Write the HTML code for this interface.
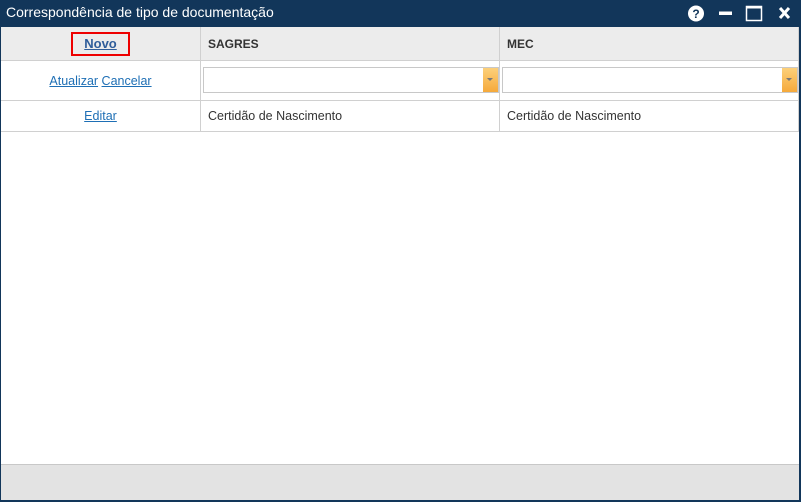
<!DOCTYPE html>
<html><head><meta charset="utf-8"><style>
*{margin:0;padding:0;box-sizing:border-box}
body{width:801px;height:502px;overflow:hidden;background:#12365a;font-family:"Liberation Sans",sans-serif;font-size:12.5px;color:#333;position:relative}
.title{position:absolute;left:0;top:0;width:801px;height:26px;background:#12365a;color:#fff;font-size:14px;line-height:25px;padding-left:6px}
.content{position:absolute;left:1px;top:27px;width:798px;height:437px;background:#fff}
.footer{position:absolute;left:1px;top:464px;width:798px;height:36px;background:#e3e3e3;border-top:1px solid #c8c8c8}
.c{position:absolute;border-right:1px solid #d0d0d0;border-bottom:1px solid #d0d0d0}
a{color:#1e6fb5;text-decoration:underline}
.dd{position:absolute;height:26px;border:1px solid #c8c8c8;background:#fff}
.arr{position:absolute;right:0;top:0;width:15px;height:24px;background:linear-gradient(#fcd07a,#f5a93b)}
.arr:after{content:"";position:absolute;left:4px;top:10px;border:3px solid transparent;border-top:3px solid #777}
</style></head><body>
<div class="title">Correspondência de tipo de documentação</div>
<svg style="position:absolute;left:686px;top:5px" width="106" height="17">
<circle cx="10" cy="8.5" r="8" fill="#fff"/>
<text x="10" y="13" text-anchor="middle" font-size="12" font-weight="bold" fill="#12365a" font-family="Liberation Sans">?</text>
<rect x="33" y="6.5" width="13" height="3.5" fill="#fff"/>
<rect x="60.5" y="1.5" width="15" height="14" fill="none" stroke="#fff" stroke-width="1.5"/>
<rect x="60" y="1" width="16" height="2.5" fill="#fff"/>
<path d="M94 3L103 13M103 3L94 13" stroke="#fff" stroke-width="3"/>
</svg>
<div class="content">
<div class="c" style="left:0;top:0;width:200px;height:34px;background:#ececec;text-align:center;line-height:34px"><a style="color:#2f5d9a;font-weight:bold;border:2px solid #e00;padding:2px 11px 3px;font-size:13px">Novo</a></div>
<div class="c" style="left:200px;top:0;width:299px;height:34px;background:#ececec;font-weight:bold;font-size:12px;line-height:34px;padding-left:7px">SAGRES</div>
<div class="c" style="left:499px;top:0;width:299px;height:34px;background:#ececec;font-weight:bold;font-size:12px;line-height:34px;padding-left:7px">MEC</div>
<div class="c" style="left:0;top:34px;width:200px;height:40px;text-align:center;line-height:40px"><a>Atualizar</a> <a>Cancelar</a></div>
<div class="c" style="left:200px;top:34px;width:299px;height:40px"></div>
<div class="c" style="left:499px;top:34px;width:299px;height:40px"></div>
<div class="dd" style="left:202px;top:40px;width:296px"><div class="arr"></div></div>
<div class="dd" style="left:501px;top:40px;width:296px"><div class="arr"></div></div>
<div class="c" style="left:0;top:74px;width:200px;height:31px;text-align:center;line-height:31px"><a>Editar</a></div>
<div class="c" style="left:200px;top:74px;width:299px;height:31px;line-height:31px;padding-left:7px">Certidão de Nascimento</div>
<div class="c" style="left:499px;top:74px;width:299px;height:31px;line-height:31px;padding-left:7px">Certidão de Nascimento</div>
</div>
<div class="footer"></div>
</body></html>
